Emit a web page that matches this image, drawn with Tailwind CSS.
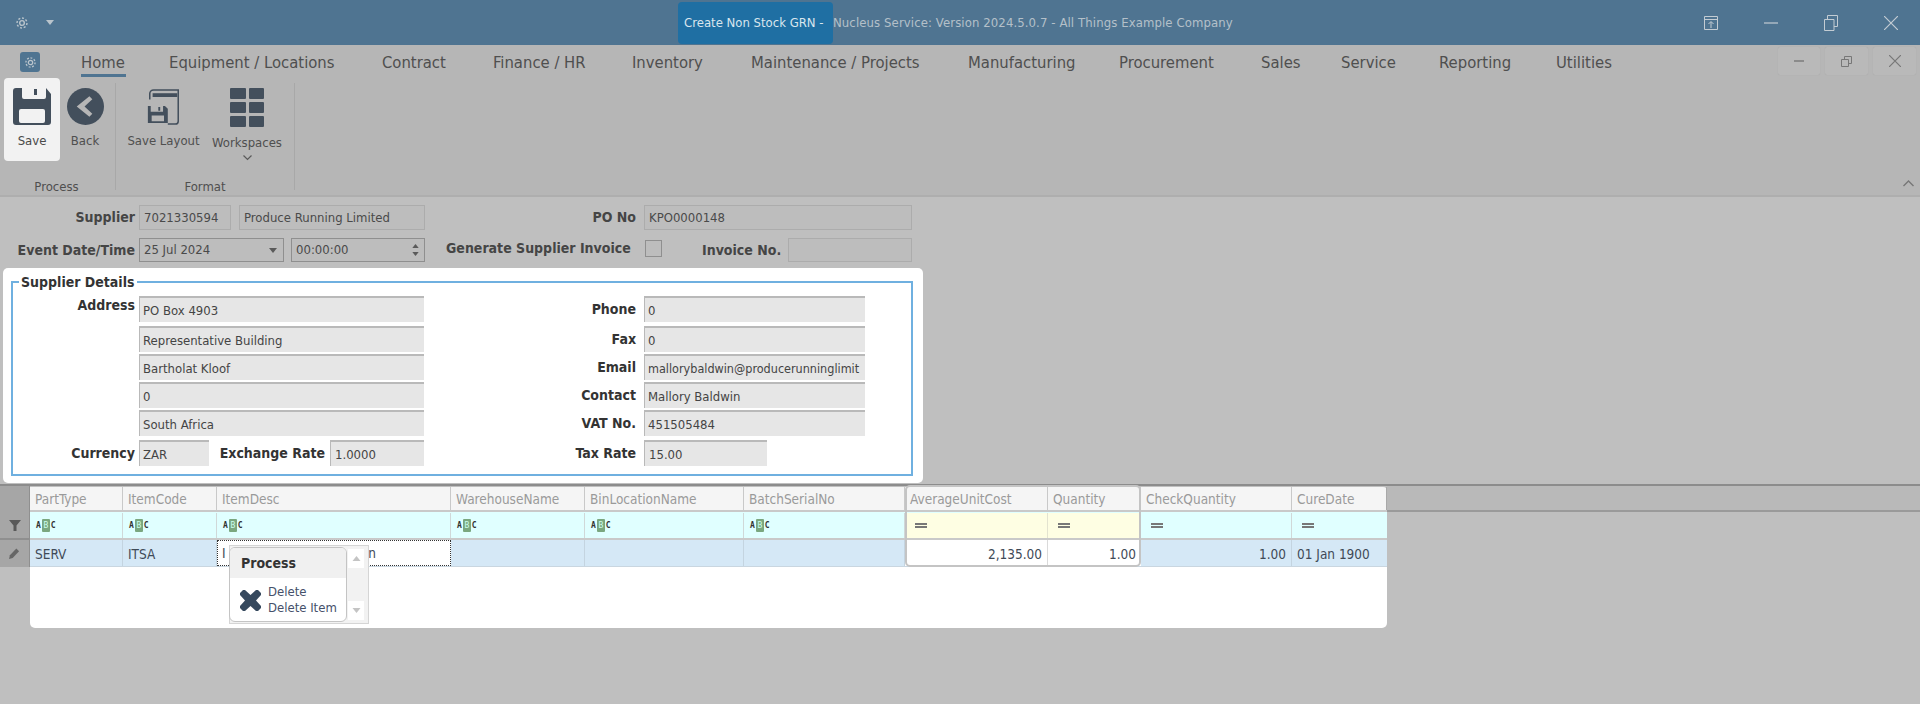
<!doctype html>
<html lang="en">
<head>
<meta charset="UTF-8">
<title>Create Non Stock GRN</title>
<script src="https://cdn.jsdelivr.net/npm/@tailwindcss/browser@4"></script>
</head>
<body class="m-0 bg-[#bfbfbf]">
<div class="relative w-[1920px] h-[704px] overflow-hidden flex flex-col bg-[#bfbfbf] font-['DejaVu_Sans',sans-serif] [font-stretch:condensed] text-[13px] text-[#4a4a4a]">

  <!-- Title bar -->
  <header class="h-[45px] shrink-0 flex items-center bg-[#4f7491] text-[13px] text-[#b4c0c9]">
    <svg class="ml-[15px] w-[14px] h-[14px]" viewBox="0 0 24 24" fill="none" stroke="#b9c4cc" stroke-width="2.4"><circle cx="12" cy="12" r="4"/><circle cx="12" cy="12" r="8.5" stroke-dasharray="3.5 3"/></svg>
    <svg class="ml-[17px] w-[8px] h-[5px]" viewBox="0 0 8 5"><path d="M0 0h8L4 5z" fill="#b9c4cc"/></svg>
    <div class="ml-[624px] w-[155px] h-[42px] rounded-[4px] bg-[#1f6fa3] flex items-center pl-[6px] text-[#d9e6ee] whitespace-nowrap">Create Non Stock GRN -</div>
    <div class="whitespace-nowrap tracking-[0.1px]">Nucleus Service: Version 2024.5.0.7 - All Things Example Company</div>
    <div class="ml-auto flex items-center">
      <svg class="w-[16px] h-[16px] mr-[45px]" viewBox="0 0 16 16" fill="none" stroke="#c3ccd3"><path d="M1.5 1.5h13v13h-13zM1.5 4.5h13M8 13V7M5.5 9L8 6.5 10.5 9"/></svg>
      <svg class="w-[14px] h-[14px] mr-[46px]" viewBox="0 0 14 14" stroke="#c3ccd3" stroke-width="1.2"><path d="M0 7h14"/></svg>
      <svg class="w-[14px] h-[16px] mr-[46px]" viewBox="0 0 14 16" fill="none" stroke="#c3ccd3"><path d="M.5 4.5h9.500v11h-9.500zM3.500 4.500v-4h10v11h-3.500"/></svg>
      <svg class="w-[14px] h-[14px] mr-[22px]" viewBox="0 0 14 14" stroke="#c3ccd3" stroke-width="1.2"><path d="M0 0l14 14M14 0L0 14"/></svg>
    </div>
  </header>

  <!-- Ribbon -->
  <section class="relative h-[152px] shrink-0 bg-[#b6b6b6] border-b-2 border-[#aeaeae] flex flex-col">
    <nav class="h-[33px] shrink-0 flex items-start text-[16.5px] text-[#4f4f4f] whitespace-nowrap">
      <div class="ml-[20px] mt-[7px] w-[20px] h-[20px] rounded-[3px] bg-[#4f7491] flex items-center justify-center">
        <svg class="w-[13px] h-[13px]" viewBox="0 0 24 24" fill="none" stroke="#b9c4cc" stroke-width="2.4"><circle cx="12" cy="12" r="4"/><circle cx="12" cy="12" r="8.500" stroke-dasharray="3.5 3"/></svg>
      </div>
      <a class="ml-[41px] mt-[6px] w-[45px] h-[26px] border-b-[3px] border-[#4f7491]">Home</a>
      <a class="ml-[43px] mt-[6px] w-[171px]">Equipment / Locations</a>
      <a class="ml-[42px] mt-[6px] w-[68px]">Contract</a>
      <a class="ml-[43px] mt-[6px] w-[96px]">Finance / HR</a>
      <a class="ml-[43px] mt-[6px] w-[77px]">Inventory</a>
      <a class="ml-[42px] mt-[6px] w-[174px]">Maintenance / Projects</a>
      <a class="ml-[43px] mt-[6px] w-[108px]">Manufacturing</a>
      <a class="ml-[43px] mt-[6px] w-[100px]">Procurement</a>
      <a class="ml-[42px] mt-[6px] w-[38px]">Sales</a>
      <a class="ml-[42px] mt-[6px] w-[55px]">Service</a>
      <a class="ml-[43px] mt-[6px] w-[74px]">Reporting</a>
      <a class="ml-[43px] mt-[6px] w-[50px]">Utilities</a>
      <div class="ml-auto mr-[4px] mt-[2px] flex gap-[5px]">
        <button class="w-[42px] h-[28px] rounded-[2px] bg-[#b9b9b9] shadow-[0_0_1px_#a0a0a0] flex items-center justify-center"><svg class="w-[10px] h-[2px]" viewBox="0 0 10 2"><path d="M0 1h10" stroke="#777" stroke-width="1.4"/></svg></button>
        <button class="w-[43px] h-[28px] rounded-[2px] bg-[#b9b9b9] shadow-[0_0_1px_#a0a0a0] flex items-center justify-center"><svg class="w-[11px] h-[11px]" viewBox="0 0 11 11" fill="none" stroke="#777"><path d="M.5 3.500h7v7h-7zM3.500 3.500v-3h7v7h-3"/></svg></button>
        <button class="w-[43px] h-[28px] rounded-[2px] bg-[#b9b9b9] shadow-[0_0_1px_#a0a0a0] flex items-center justify-center"><svg class="w-[12px] h-[12px]" viewBox="0 0 12 12" stroke="#777" stroke-width="1.2"><path d="M0 0l12 12M12 0L0 12"/></svg></button>
      </div>
    </nav>
    <div class="flex-1 flex text-[13px] text-[#4f4f4f]">
      <!-- Process -->
      <div class="w-[116px] shrink-0 flex flex-col border-r border-[#a8a8a8] mb-[5px] mt-[5px]">
        <div class="flex h-[83px] -mt-[5px]">
          <div class="ml-[4px] w-[56px] h-[83px] rounded-[4px] bg-[#f2f2f2] flex flex-col items-center pt-[10px] text-[#4a4a4a]">
            <svg class="w-[38px] h-[37px]" viewBox="0 0 38 37"><path fill-rule="evenodd" fill="#434f5c" d="M3 0h6v9a2 2 0 0 0 2 2h20a2 2 0 0 0 2-2V0l5 6v28a3 3 0 0 1-3 3H3a3 3 0 0 1-3-3V3a3 3 0 0 1 3-3zM8 21a2 2 0 0 0-2 2v10a2 2 0 0 0 2 2h22a2 2 0 0 0 2-2V23a2 2 0 0 0-2-2z"/><path d="M21 1h3v6h-3z" fill="#434f5c"/></svg>
            <span class="mt-[6px]">Save</span>
          </div>
          <div class="w-[44px] flex flex-col items-center pt-[10px] ml-[3px]">
            <svg class="w-[37px] h-[37px]" viewBox="0 0 38 38"><circle cx="19" cy="19" r="19" fill="#434f5c"/><path d="M23 8.500L10 19l13 10.500 3-3-8-7.500 8-7.500z" fill="#b6b6b6"/></svg>
            <span class="mt-[6px]">Back</span>
          </div>
        </div>
        <div class="mt-auto -mb-[6px] text-center text-[13px] pr-[2px]">Process</div>
      </div>
      <!-- Format -->
      <div class="w-[179px] shrink-0 flex flex-col border-r border-[#a8a8a8] mt-[5px] mb-[5px]">
        <div class="flex -mt-[5px] pt-[10px]">
          <div class="ml-[10px] w-[75px] flex flex-col items-center">
            <svg class="w-[36px] h-[37px]" viewBox="0 0 36 39" fill="none"><path d="M3 12V6a4 4 0 0 1 4-4h26v33a3 3 0 0 1-3 3h-8" stroke="#434f5c" stroke-width="1.600"/><path d="M6 5.500h26v4H6z" fill="#434f5c"/><path fill="#434f5c" d="M1 19h3v6h13v-6h2l3 3v15H1zM12 20h2v4h-2zM5 29v6h13v-6z" fill-rule="evenodd"/></svg>
            <span class="mt-[6px] whitespace-nowrap">Save Layout</span>
          </div>
          <div class="ml-[10px] w-[72px] flex flex-col items-center">
            <div class="grid grid-cols-2 gap-[3px] w-[34px]">
              <i class="h-[11px] rounded-[1px] bg-[#434f5c]"></i><i class="h-[11px] rounded-[1px] bg-[#434f5c]"></i>
              <i class="h-[11px] rounded-[1px] bg-[#434f5c]"></i><i class="h-[11px] rounded-[1px] bg-[#434f5c]"></i>
              <i class="h-[11px] rounded-[1px] bg-[#434f5c]"></i><i class="h-[11px] rounded-[1px] bg-[#434f5c]"></i>
            </div>
            <span class="mt-[6px]">Workspaces</span>
            <svg class="mt-[2px] w-[9px] h-[6px]" viewBox="0 0 9 6" fill="none" stroke="#5a5a5a" stroke-width="1.200"><path d="M.5.500l4 4 4-4"/></svg>
          </div>
        </div>
        <div class="mt-auto -mb-[6px] text-center">Format</div>
      </div>
    </div>
    <svg class="absolute right-[6px] bottom-[8px] w-[11px] h-[7px]" viewBox="0 0 11 7" fill="none" stroke="#777" stroke-width="1.400"><path d="M.5 6l5-5 5 5"/></svg>
  </section>

  <!-- Header fields -->
  <section class="h-[71px] shrink-0 pt-[8px] flex flex-col gap-[8px] text-[13px]">
    <div class="flex items-center h-[25px]">
      <label class="w-[135px] text-right font-bold text-[14px] text-[#454545]">Supplier</label>
      <div class="ml-[4px] w-[92px] h-[25px] px-[4px] leading-[23px] border border-[#acacac] bg-[#bdbdbd]">7021330594</div>
      <div class="ml-[8px] w-[186px] h-[25px] px-[4px] leading-[23px] border border-[#acacac] bg-[#bdbdbd]">Produce Running Limited</div>
      <label class="ml-[112px] w-[99px] text-right font-bold text-[14px] text-[#454545]">PO No</label>
      <div class="ml-[8px] w-[268px] h-[25px] px-[4px] leading-[23px] border border-[#acacac] bg-[#bdbdbd]">KPO0000148</div>
    </div>
    <div class="flex items-center h-[24px]">
      <label class="w-[135px] text-right font-bold text-[14px] text-[#454545] whitespace-nowrap">Event Date/Time</label>
      <div class="ml-[4px] w-[145px] h-[24px] px-[4px] leading-[22px] border border-[#8f8f8f] bg-[#bdbdbd] flex justify-between items-center">25 Jul 2024
        <svg class="w-[8px] h-[5px] mr-[2px]" viewBox="0 0 8 5"><path d="M0 0h8L4 5z" fill="#5a5a5a"/></svg></div>
      <div class="ml-[7px] w-[134px] h-[24px] px-[4px] leading-[22px] border border-[#8f8f8f] bg-[#bdbdbd] flex justify-between items-center">00:00:00
        <div class="flex flex-col gap-[4px] mr-[1px]"><svg class="w-[7px] h-[4px]" viewBox="0 0 8 5"><path d="M0 5h8L4 0z" fill="#5a5a5a"/></svg><svg class="w-[7px] h-[4px]" viewBox="0 0 8 5"><path d="M0 0h8L4 5z" fill="#5a5a5a"/></svg></div></div>
      <label class="ml-[21px] w-[184px] -mt-[3px] text-right font-bold text-[14px] text-[#454545] whitespace-nowrap">Generate Supplier Invoice</label>
      <div class="ml-[15px] w-[17px] h-[17px] -mt-[3px] border border-[#8f8f8f] bg-[#bdbdbd]"></div>
      <label class="ml-[40px] w-[78px] text-right font-bold text-[14px] text-[#454545] whitespace-nowrap">Invoice No.</label>
      <div class="ml-[8px] w-[124px] h-[24px] border border-[#acacac] bg-[#bdbdbd]"></div>
    </div>
  </section>

  <!-- Supplier Details card -->
  <section class="ml-[3px] w-[920px] h-[215px] shrink-0 bg-white rounded-[5px] px-[8px] pt-[6px]">
    <fieldset class="relative w-[902px] h-[202px] border-2 border-[#6fb0e0] text-[#444]">
      <legend class="ml-[6px] px-[2px] font-bold text-[14px] leading-[16px] text-[#333]">Supplier Details</legend>
      <div class="grid grid-cols-[122px_289px_212px_229px] grid-rows-[28px_26px_26px_26px_28px_26px] gap-y-[2px] mt-[6px] items-stretch text-[13px]">
        <label class="text-right font-bold text-[14px] text-[#333] leading-[18px]">Address</label>
        <div class="ml-[4px] mb-[2px] px-[3px] leading-[25px] bg-[#e6e6e6] border-t-2 border-l border-[#b9b9b9]">PO Box 4903</div>
        <label class="text-right font-bold text-[14px] text-[#333] leading-[26px]">Phone</label>
        <div class="ml-[8px] mb-[2px] px-[3px] leading-[25px] bg-[#e6e6e6] border-t-2 border-l border-[#b9b9b9]">0</div>

        <span></span>
        <div class="ml-[4px] px-[3px] leading-[25px] bg-[#e6e6e6] border-t-2 border-l border-[#b9b9b9]">Representative Building</div>
        <label class="text-right font-bold text-[14px] text-[#333] leading-[26px]">Fax</label>
        <div class="ml-[8px] px-[3px] leading-[25px] bg-[#e6e6e6] border-t-2 border-l border-[#b9b9b9]">0</div>

        <span></span>
        <div class="ml-[4px] px-[3px] leading-[25px] bg-[#e6e6e6] border-t-2 border-l border-[#b9b9b9]">Bartholat Kloof</div>
        <label class="text-right font-bold text-[14px] text-[#333] leading-[26px]">Email</label>
        <div class="ml-[8px] px-[3px] leading-[25px] bg-[#e6e6e6] border-t-2 border-l border-[#b9b9b9] overflow-hidden whitespace-nowrap text-[12.5px]">mallorybaldwin@producerunninglimit</div>

        <span></span>
        <div class="ml-[4px] px-[3px] leading-[25px] bg-[#e6e6e6] border-t-2 border-l border-[#b9b9b9]">0</div>
        <label class="text-right font-bold text-[14px] text-[#333] leading-[26px]">Contact</label>
        <div class="ml-[8px] px-[3px] leading-[25px] bg-[#e6e6e6] border-t-2 border-l border-[#b9b9b9]">Mallory Baldwin</div>

        <span></span>
        <div class="ml-[4px] mb-[2px] px-[3px] leading-[25px] bg-[#e6e6e6] border-t-2 border-l border-[#b9b9b9]">South Africa</div>
        <label class="text-right font-bold text-[14px] text-[#333] leading-[26px]">VAT No.</label>
        <div class="ml-[8px] mb-[2px] px-[3px] leading-[25px] bg-[#e6e6e6] border-t-2 border-l border-[#b9b9b9]">451505484</div>

        <label class="text-right font-bold text-[14px] text-[#333] leading-[26px]">Currency</label>
        <div class="ml-[4px] flex">
          <div class="w-[70px] px-[3px] leading-[25px] bg-[#e6e6e6] border-t-2 border-l border-[#b9b9b9]">ZAR</div>
          <label class="w-[116px] text-right font-bold text-[14px] text-[#333] leading-[26px] whitespace-nowrap">Exchange Rate</label>
          <div class="ml-[5px] w-[94px] px-[4px] leading-[25px] bg-[#e6e6e6] border-t-2 border-l border-[#b9b9b9]">1.0000</div>
        </div>
        <label class="text-right font-bold text-[14px] text-[#333] leading-[26px]">Tax Rate</label>
        <div class="ml-[8px] w-[123px] px-[4px] leading-[25px] bg-[#e6e6e6] border-t-2 border-l border-[#b9b9b9]">15.00</div>
      </div>
    </fieldset>
  </section>

  <!-- Grid -->
  <section class="relative mt-[1px] border-t-2 border-[#8c8c8c] text-[13.5px]">
    <div class="flex h-[26px]">
      <div class="w-[30px] shrink-0 bg-[#a6a6a6] border-r border-[#8f8f8f]"></div>
      <div class="flex mt-[1px] bg-[#f5f5f5] text-[#9a9a9a] border-b-2 border-[#c9c9c9] whitespace-nowrap rounded-tr-[4px]">
        <div class="w-[93px] pl-[5px] leading-[24px] border-r border-[#c9c9c9]">PartType</div>
        <div class="w-[94px] pl-[5px] leading-[24px] border-r border-[#c9c9c9]">ItemCode</div>
        <div class="w-[234px] pl-[5px] leading-[24px] border-r border-[#c9c9c9]">ItemDesc</div>
        <div class="w-[134px] pl-[5px] leading-[24px] border-r border-[#c9c9c9]">WarehouseName</div>
        <div class="w-[159px] pl-[5px] leading-[24px] border-r border-[#c9c9c9]">BinLocationName</div>
        <div class="w-[161px] pl-[5px] leading-[24px] border-r border-[#c9c9c9]">BatchSerialNo</div>
        <div class="w-[143px] pl-[5px] leading-[24px] border-r border-[#c9c9c9]">AverageUnitCost</div>
        <div class="w-[93px] pl-[5px] leading-[24px] border-r border-[#c9c9c9]">Quantity</div>
        <div class="w-[151px] pl-[5px] leading-[24px] border-r border-[#c9c9c9]">CheckQuantity</div>
        <div class="w-[95px] pl-[5px] leading-[24px] border-r border-[#a9a9a9]">CureDate</div>
      </div>
      <div class="flex-1 bg-[#b9b9b9] border-b-2 border-[#9a9a9a]"></div>
    </div>
    <div class="flex h-[28px]">
      <div class="w-[30px] shrink-0 bg-[#a6a6a6] border-r border-b-2 border-[#8f8f8f] flex items-center justify-center">
        <svg class="w-[12px] h-[12px]" viewBox="0 0 12 12"><path d="M0 1h12L7.500 6.500V12h-3V6.500z" fill="#595959"/></svg>
      </div>
      <div class="flex bg-[#e0ffff] border-b-2 border-[#c9c9c9] pt-[1px]">
        <div class="w-[93px] pl-[6px] flex items-center border-r border-[#d0d8d8]"><span class="font-['DejaVu_Sans_Mono',monospace] text-[8px] font-bold text-[#333] flex items-center">A<b class="w-[8px] h-[13px] bg-[#7aa77f] rounded-[1px] mx-[1px] text-center text-[#cfe] font-normal leading-[13px]">B</b>C</span></div>
        <div class="w-[94px] pl-[6px] flex items-center border-r border-[#d0d8d8]"><span class="font-['DejaVu_Sans_Mono',monospace] text-[8px] font-bold text-[#333] flex items-center">A<b class="w-[8px] h-[13px] bg-[#7aa77f] rounded-[1px] mx-[1px] text-center text-[#cfe] font-normal leading-[13px]">B</b>C</span></div>
        <div class="w-[234px] pl-[6px] flex items-center border-r border-[#d0d8d8]"><span class="font-['DejaVu_Sans_Mono',monospace] text-[8px] font-bold text-[#333] flex items-center">A<b class="w-[8px] h-[13px] bg-[#7aa77f] rounded-[1px] mx-[1px] text-center text-[#cfe] font-normal leading-[13px]">B</b>C</span></div>
        <div class="w-[134px] pl-[6px] flex items-center border-r border-[#d0d8d8]"><span class="font-['DejaVu_Sans_Mono',monospace] text-[8px] font-bold text-[#333] flex items-center">A<b class="w-[8px] h-[13px] bg-[#7aa77f] rounded-[1px] mx-[1px] text-center text-[#cfe] font-normal leading-[13px]">B</b>C</span></div>
        <div class="w-[159px] pl-[6px] flex items-center border-r border-[#d0d8d8]"><span class="font-['DejaVu_Sans_Mono',monospace] text-[8px] font-bold text-[#333] flex items-center">A<b class="w-[8px] h-[13px] bg-[#7aa77f] rounded-[1px] mx-[1px] text-center text-[#cfe] font-normal leading-[13px]">B</b>C</span></div>
        <div class="w-[161px] pl-[6px] flex items-center border-r border-[#d0d8d8]"><span class="font-['DejaVu_Sans_Mono',monospace] text-[8px] font-bold text-[#333] flex items-center">A<b class="w-[8px] h-[13px] bg-[#7aa77f] rounded-[1px] mx-[1px] text-center text-[#cfe] font-normal leading-[13px]">B</b>C</span></div>
        <div class="w-[143px] pl-[10px] flex items-center bg-[#fefee3] border-r border-[#e3e3d0]"><i class="w-[12px] h-[5px] border-y-2 border-[#777]"></i></div>
        <div class="w-[93px] pl-[10px] flex items-center bg-[#fefee3]"><i class="w-[12px] h-[5px] border-y-2 border-[#777]"></i></div>
        <div class="w-[151px] pl-[10px] flex items-center border-r border-[#d0d8d8]"><i class="w-[12px] h-[5px] border-y-2 border-[#777]"></i></div>
        <div class="w-[95px] pl-[10px] flex items-center"><i class="w-[12px] h-[5px] border-y-2 border-[#777]"></i></div>
      </div>
      <div class="flex-1"></div>
    </div>
    <div class="flex h-[27px]">
      <div class="w-[30px] shrink-0 bg-[#a6a6a6] border-r border-[#8f8f8f] flex items-center justify-center">
        <svg class="w-[11px] h-[11px]" viewBox="0 0 12 12"><path d="M0 12l1-4 7-7.500 3 3L4 11z" fill="#666"/></svg>
      </div>
      <div class="flex bg-[#d5e8f6] border-b border-[#c9d6e0] text-[#3f4a57]">
        <div class="w-[93px] pl-[5px] leading-[28px] border-r border-[#c4d4e0]">SERV</div>
        <div class="w-[94px] pl-[5px] leading-[28px] border-r border-[#c4d4e0]">ITSA</div>
        <div class="w-[234px] pl-[4px] pr-[74px] leading-[25px] bg-white border border-dotted border-[#333] flex justify-between"><span>I</span><span>n</span></div>
        <div class="w-[134px] border-r border-[#c4d4e0]"></div>
        <div class="w-[159px] border-r border-[#c4d4e0]"></div>
        <div class="w-[161px] border-r border-[#c4d4e0]"></div>
        <div class="w-[143px] pr-[5px] text-right leading-[28px] bg-white border-r border-[#dadada]">2,135.00</div>
        <div class="w-[93px] pr-[5px] text-right leading-[28px] bg-white">1.00</div>
        <div class="w-[151px] pr-[5px] text-right leading-[28px] border-r border-[#c4d4e0]">1.00</div>
        <div class="w-[95px] pl-[5px] leading-[28px] whitespace-nowrap">01 Jan 1900</div>
      </div>
    </div>
    <div class="flex h-[61px]">
      <div class="w-[30px] shrink-0"></div>
      <div class="w-[1357px] bg-white rounded-b-[5px]"></div>
    </div>

    <!-- column highlight -->
    <div class="absolute left-[905px] -top-[1px] w-[236px] h-[82px] rounded-[5px] border-2 border-[#c4c4c4]"></div>

    <!-- Context menu over the ItemDesc cell -->
    <div class="absolute left-[229px] top-[59px] w-[140px] h-[79px] bg-[#f2f2f2] border border-[#d5d5d5] flex flex-col items-end justify-between py-[3px] pr-[4px]">
      <div class="w-[16px] h-[19px] bg-white flex items-center justify-center"><svg class="w-[9px] h-[5px]" viewBox="0 0 8 5"><path d="M0 5h8L4 0z" fill="#c4c4c4"/></svg></div>
      <div class="w-[16px] h-[19px] bg-white flex items-center justify-center"><svg class="w-[9px] h-[5px]" viewBox="0 0 8 5"><path d="M0 0h8L4 5z" fill="#c4c4c4"/></svg></div>
    </div>
    <div class="absolute left-[229px] top-[61px] w-[118px] h-[75px] bg-white rounded-[6px] border border-[#c4c4c4] overflow-hidden">
      <div class="h-[30px] bg-[#f0f0f0] pl-[11px] leading-[30px] font-bold text-[14px] text-[#333]">Process</div>
      <div class="flex items-center pl-[10px] pt-[6px]">
        <svg class="w-[21px] h-[21px]" viewBox="0 0 21 21"><path d="M0 3l3-3h2l5.500 5L16 0h2l3 3v2l-5 5.500 5 5.500v2l-3 3h-2l-5.500-5L5 21H3l-3-3v-2l5-5.500L0 5z" fill="#36495e"/></svg>
        <div class="ml-[7px] leading-[16px] text-[13px] text-[#45506a] whitespace-nowrap">Delete<br>Delete Item</div>
      </div>
    </div>
  </section>
</div>
</body>
</html>
